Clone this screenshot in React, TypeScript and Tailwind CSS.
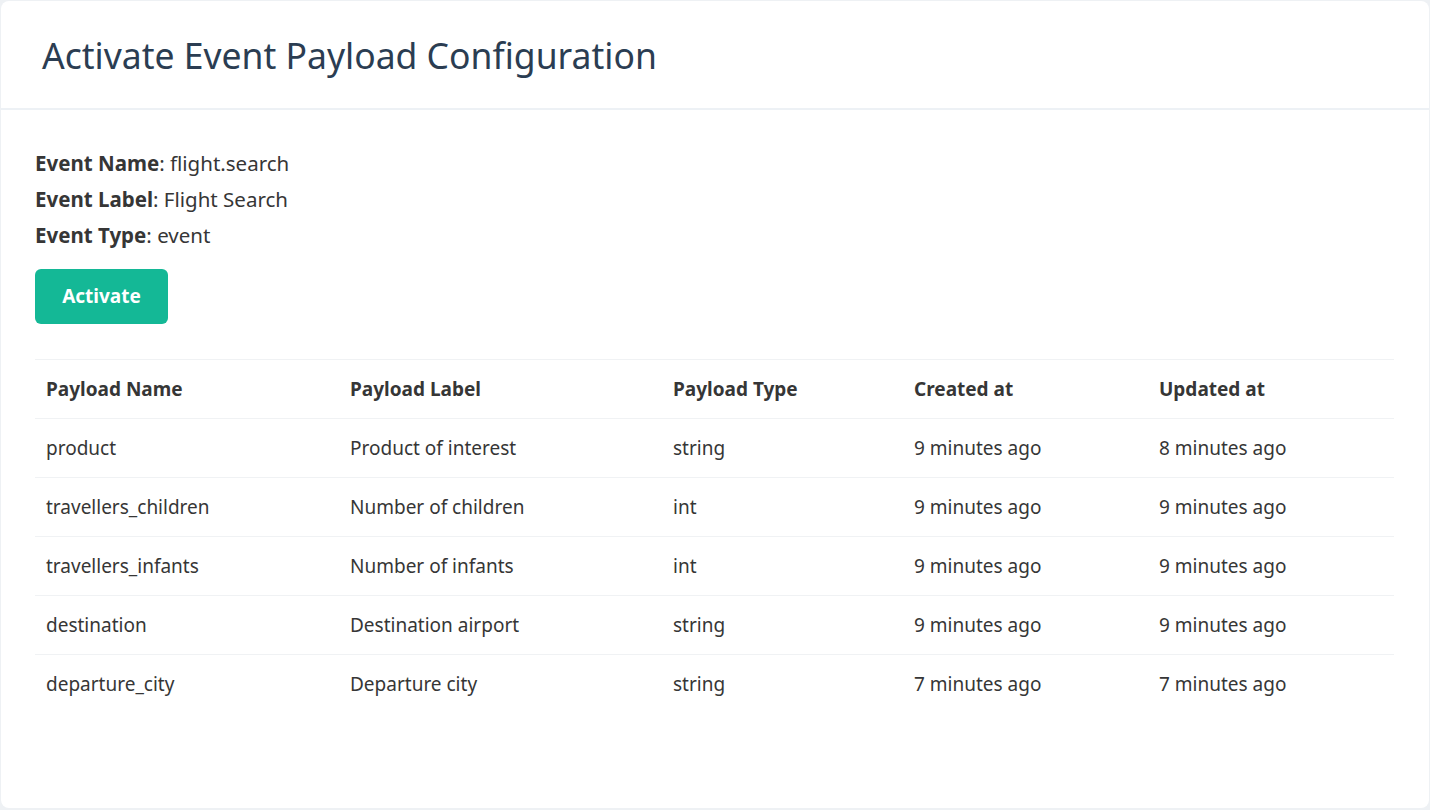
import React from 'react';

const event = {
  name: 'flight.search',
  label: 'Flight Search',
  type: 'event',
};

const payloads = [
  { name: 'product', label: 'Product of interest', type: 'string', created: '9 minutes ago', updated: '8 minutes ago' },
  { name: 'travellers_children', label: 'Number of children', type: 'int', created: '9 minutes ago', updated: '9 minutes ago' },
  { name: 'travellers_infants', label: 'Number of infants', type: 'int', created: '9 minutes ago', updated: '9 minutes ago' },
  { name: 'destination', label: 'Destination airport', type: 'string', created: '9 minutes ago', updated: '9 minutes ago' },
  { name: 'departure_city', label: 'Departure city', type: 'string', created: '7 minutes ago', updated: '7 minutes ago' },
];

const App = () => {
  return (
    <div className="min-h-screen bg-[#eef1f4] p-px font-['Noto_Sans',sans-serif] text-[#363636]">
      <div className="h-[807px] rounded-lg bg-white">
        {/* Card header */}
        <div className="h-[109px] border-b-2 border-[#edf1f5] pl-[41px] pt-[30px]">
          <h1 className="text-[35.5px] leading-[48px] text-[#2b3d52]">Activate Event Payload Configuration</h1>
        </div>

        {/* Card body */}
        <div className="pl-[34px] pr-[35px] pt-[35px]">
          <div className="text-[20.5px] leading-[36px]">
            <p><span className="font-bold">Event Name</span>: {event.name}</p>
            <p><span className="font-bold">Event Label</span>: {event.label}</p>
            <p><span className="font-bold">Event Type</span>: {event.type}</p>
          </div>

          <button className="mt-[16px] h-[55px] w-[133px] rounded-[6px] bg-[#14b896] text-[19px] font-bold text-white">
            Activate
          </button>

          <table className="mt-[35px] w-full border-collapse text-left text-[19px]">
            <thead>
              <tr className="h-[59px] border-y border-[#f0f2f4]">
                <th className="w-[304px] pl-[11px] font-bold">Payload Name</th>
                <th className="w-[323px] pl-[11px] font-bold">Payload Label</th>
                <th className="w-[241px] pl-[11px] font-bold">Payload Type</th>
                <th className="w-[245px] pl-[11px] font-bold">Created at</th>
                <th className="pl-[11px] font-bold">Updated at</th>
              </tr>
            </thead>
            <tbody>
              {payloads.map((p, i) => (
                <tr
                  key={p.name}
                  className={`h-[59px] ${i < payloads.length - 1 ? 'border-b border-[#f0f2f4]' : ''}`}
                >
                  <td className="pl-[11px]">{p.name}</td>
                  <td className="pl-[11px]">{p.label}</td>
                  <td className="pl-[11px]">{p.type}</td>
                  <td className="pl-[11px]">{p.created}</td>
                  <td className="pl-[11px]">{p.updated}</td>
                </tr>
              ))}
            </tbody>
          </table>
        </div>
      </div>
    </div>
  );
};

export default App;
